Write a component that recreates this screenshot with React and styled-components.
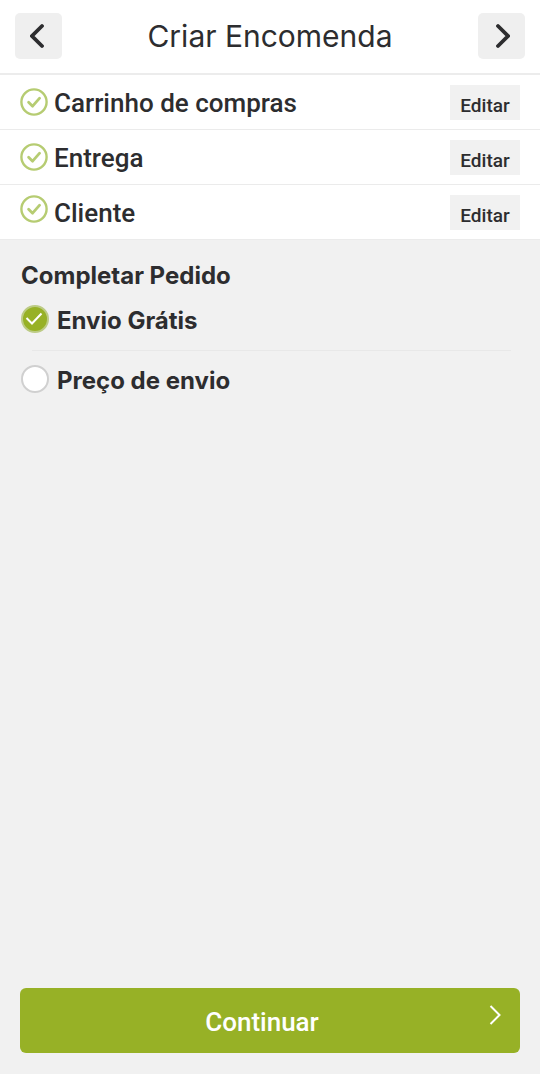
import React, { useState } from "react";
import styled, { createGlobalStyle } from "styled-components";

const GlobalStyle = createGlobalStyle`
  * {
    box-sizing: border-box;
  }

  body {
    margin: 0;
    background-color: #f1f1f1;
    color: #2d2d2f;
    font-family: Roboto, sans-serif;
  }

  button {
    border: none;
    color: inherit;
    font-family: inherit;
    cursor: pointer;
  }
`;

const Page = styled.div`
  display: flex;
  flex-direction: column;
  min-height: 100vh;
`;

const Header = styled.header`
  display: flex;
  align-items: center;
  justify-content: space-between;
  padding: 13px 15px 14px;
  background-color: #fff;
  border-bottom: 2px solid #ececec;
`;

const Title = styled.h1`
  margin: 0;
  font-family: Inter, sans-serif;
  font-size: 30px;
  font-weight: 400;
  line-height: 46px;
`;

const NavButton = styled.button`
  display: flex;
  align-items: center;
  justify-content: center;
  width: 47px;
  height: 46px;
  padding: ${props => (props.$next ? "0 0 0 3px" : "0 3px 0 0")};
  border-radius: 5px;
  background-color: #efefef;
`;

const Steps = styled.ul`
  margin: 0;
  padding: 0;
  list-style: none;
  background-color: #fff;
`;

const Step = styled.li`
  display: flex;
  align-items: center;
  gap: 6px;
  padding: 10px 20px 9px;
  border-bottom: 1px solid #ebebeb;
`;

const StepIcon = styled.svg`
  flex: none;
  margin-bottom: ${props => (props.$raised ? "7px" : "2px")};
`;

const StepName = styled.span`
  flex: 1;
  font-size: 26px;
  font-weight: 500;
  line-height: 34px;
`;

const EditButton = styled.button`
  width: 70px;
  height: 35px;
  padding: 6px 0 0;
  background-color: #f1f1f1;
  font-size: 19px;
  font-weight: 500;
  line-height: 28px;
`;

const Order = styled.fieldset`
  flex: 1;
  min-width: 0;
  margin: 0;
  padding: 20px 21px;
  border: none;
  font-family: Inter, sans-serif;
  font-size: 24px;
  font-weight: 700;
  line-height: 32px;
`;

const OrderTitle = styled.h2`
  margin: 0 0 13px;
  font-size: inherit;
  font-weight: inherit;
`;

const Option = styled.label`
  display: flex;
  align-items: flex-start;
  gap: 8px;
  cursor: pointer;
`;

const RadioBox = styled.span`
  position: relative;
  display: flex;
  flex: none;
`;

const Radio = styled.input`
  appearance: none;
  width: 28px;
  height: 28px;
  margin: 0;
  border: 2px solid #d0d0d0;
  border-radius: 50%;
  background-color: #fff;

  &:checked {
    border-color: #bccb84;
    background-color: #97b126;
  }
`;

const RadioMark = styled.svg`
  position: absolute;
  inset: 0;
  pointer-events: none;
`;

const Divider = styled.hr`
  margin: 13px 8px 14px 11px;
  border: none;
  border-top: 1px solid #e8e8e8;
`;

const Footer = styled.footer`
  padding: 0 20px 21px;
`;

const ContinueButton = styled.button`
  display: grid;
  grid-template-columns: 1fr auto 1fr;
  width: 100%;
  height: 65px;
  padding: 17px 19px 0 3px;
  border-radius: 6px;
  background-color: #97b126;
  color: #fff;
  font-size: 26px;
  font-weight: 500;
  line-height: 34px;

  span {
    grid-column: 2;
  }

  svg {
    justify-self: end;
  }
`;

const steps = ["Carrinho de compras", "Entrega", "Cliente"];
const options = ["Envio Grátis", "Preço de envio"];

function App() {
  const [selected, setSelected] = useState(options[0]);

  return (
    <Page>
      <GlobalStyle />
      <Header>
        <NavButton type="button" aria-label="Voltar">
          <svg width="14" height="26" viewBox="0 0 14 26" fill="none">
            <path d="M12 3 2 13l10 10" stroke="#2d2d2f" strokeWidth="3.8" strokeLinecap="round" />
          </svg>
        </NavButton>
        <Title>Criar Encomenda</Title>
        <NavButton type="button" aria-label="Avançar" $next>
          <svg width="14" height="26" viewBox="0 0 14 26" fill="none">
            <path d="M2 3l10 10L2 23" stroke="#2d2d2f" strokeWidth="3.8" strokeLinecap="round" />
          </svg>
        </NavButton>
      </Header>

      <Steps>
        {steps.map((step, index) => (
          <Step key={step}>
            <StepIcon
              width="28"
              height="28"
              viewBox="0 0 28 28"
              fill="none"
              stroke="#b6cc72"
              $raised={index === steps.length - 1}
            >
              <circle cx="14" cy="14" r="12.6" strokeWidth="2.4" />
              <path d="M8.6 14.2l4 4 7-8" strokeWidth="2.8" strokeLinecap="round" strokeLinejoin="round" />
            </StepIcon>
            <StepName>{step}</StepName>
            <EditButton type="button" aria-label={`Editar ${step}`}>
              Editar
            </EditButton>
          </Step>
        ))}
      </Steps>

      <Order aria-labelledby="order-title">
        <OrderTitle id="order-title">Completar Pedido</OrderTitle>
        {options.map((option, index) => (
          <React.Fragment key={option}>
            {index > 0 && <Divider />}
            <Option>
              <RadioBox>
                <Radio
                  type="radio"
                  name="shipping"
                  checked={selected === option}
                  onChange={() => setSelected(option)}
                />
                {selected === option && (
                  <RadioMark width="28" height="28" viewBox="0 0 28 28" fill="none">
                    <path d="M5.5 13l5.5 5.5L20.5 8.5" stroke="#fff" strokeWidth="2" />
                  </RadioMark>
                )}
              </RadioBox>
              {option}
            </Option>
          </React.Fragment>
        ))}
      </Order>

      <Footer>
        <ContinueButton type="button">
          <span>Continuar</span>
          <svg width="12" height="20" viewBox="0 0 12 20" fill="none">
            <path d="M1.5 1l9 9-9 9" stroke="#fff" strokeWidth="2" />
          </svg>
        </ContinueButton>
      </Footer>
    </Page>
  );
}

export default App;
